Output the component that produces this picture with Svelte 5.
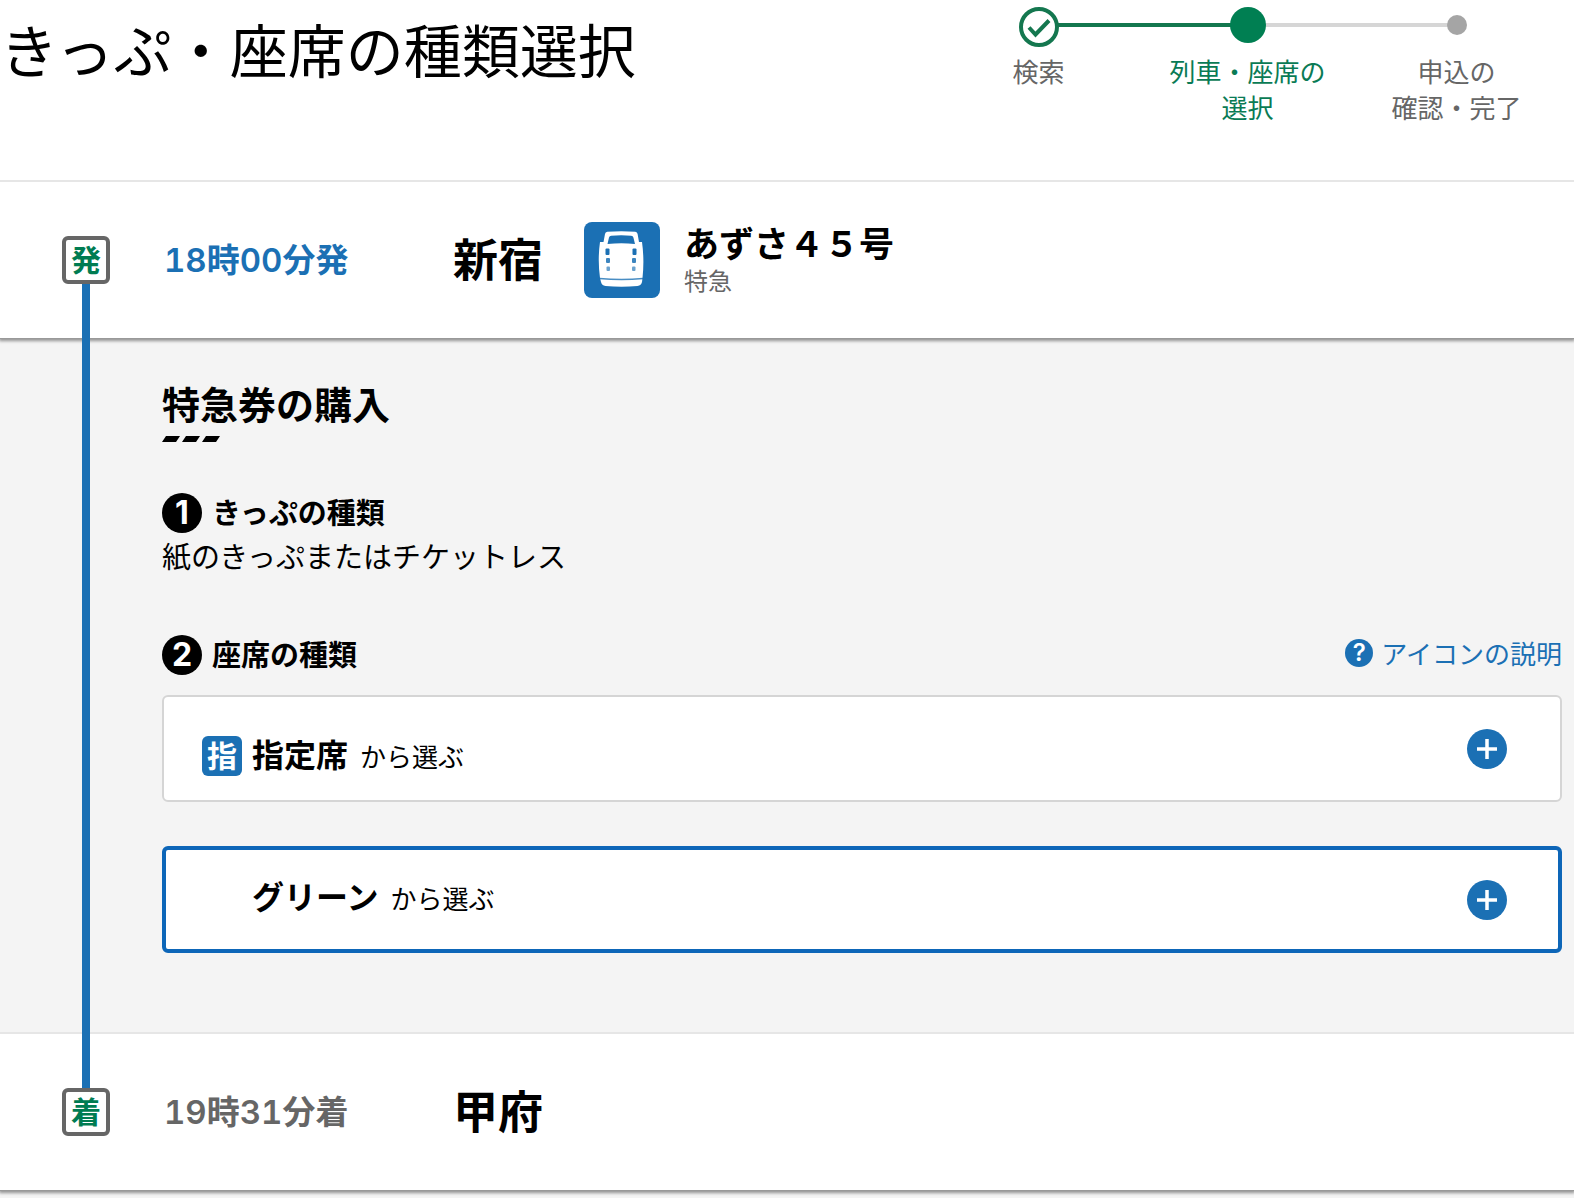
<script lang="ts">
	const steps = [
		{ lines: ['検索'], state: 'done' },
		{ lines: ['列車・座席の', '選択'], state: 'current' },
		{ lines: ['申込の', '確認・完了'], state: 'todo' }
	];

	const seats = [
		{ name: '指定席', mark: '指' },
		{ name: 'グリーン', mark: '' }
	];

	let selected = $state(1);
</script>

<header>
	<h1>きっぷ・座席の種類選択</h1>
	<ol class="steps">
		{#each steps as step}
			<li class={step.state}>
				<span class="marker">
					{#if step.state == 'done'}
						<svg width="40" height="44" viewBox="0 0 40 44" aria-hidden="true">
							<circle cx="20" cy="24" r="18" fill="#fff" stroke="#14774f" stroke-width="4" />
							<path d="M10 24.5l6.5 7L30 17.5" fill="none" stroke="#14774f" stroke-width="4" />
						</svg>
					{:else}
						<span class="dot"></span>
					{/if}
				</span>
				{#each step.lines as line}
					<span class="line">{line}</span>
				{/each}
			</li>
		{/each}
	</ol>
</header>

<main>
	<section class="stop departure">
		<span class="mark">発</span>
		<span class="time">18時00分発</span>
		<strong class="station">新宿</strong>
		<div class="train">
			<svg width="76" height="76" viewBox="0 0 76 76" aria-hidden="true">
				<rect width="76" height="76" rx="8" fill="#1b70b4" />
				<path
					d="M16 20h3.500l1.500-8q.3-2 2.300-2.200q14-1.200 28 0q2 .2 2.300 2.200l1.400 8H58q2.500 18 .5 36l-.5 4q-.7 3.500-4.500 4q-16 1.300-32 0q-3.800-.5-4.500-4l-1-4q-2.500-18 0-36z"
					fill="#fff"
				/>
				<path
					d="M23.500 22l1.500-6.500q.4-1.700 2.200-1.800q10-.7 20 0q1.800.1 2.200 1.800L51 22q-13.700-1.500-27.500 0z"
					fill="#1b70b4"
				/>
				<path d="M15.500 56.500q22 2 43.500 0" fill="none" stroke="#1b70b4" stroke-width="1.500" opacity="0.8" />
				<g fill="#1b70b4">
					<rect x="21.500" y="26.500" width="4" height="6.500" rx="1" />
					<rect x="48.500" y="26.500" width="4" height="6.500" rx="1" />
					<rect x="22" y="36" width="4" height="5" rx="1" opacity="0.85" />
					<rect x="48" y="36" width="4" height="5" rx="1" opacity="0.85" />
					<rect x="22.500" y="44.500" width="3.500" height="4.500" rx="1" opacity="0.65" />
					<rect x="48" y="44.500" width="3.500" height="4.500" rx="1" opacity="0.65" />
				</g>
			</svg>
			<div>
				<p class="train-name">あずさ４５号</p>
				<p class="train-type">特急</p>
			</div>
		</div>
	</section>

	<section class="purchase">
		<h2>特急券の購入</h2>
		<svg class="slashes" width="58" height="6" viewBox="0 0 58 6" aria-hidden="true">
			<path d="M4 0h14l-4 6H0zM24 0h14l-4 6H20zM44 0h14l-4 6H40z" />
		</svg>

		<h3><span class="number">1</span>きっぷの種類</h3>
		<p class="ticket">紙のきっぷまたはチケットレス</p>

		<div class="seat-head">
			<h3><span class="number">2</span>座席の種類</h3>
			<a href="#icons">
				<span class="help">?</span>アイコンの説明
			</a>
		</div>

		<div class="seats">
			{#each seats as seat, i}
				<button type="button" class={['seat', selected == i && 'selected']} onclick={() => (selected = i)}>
					<span class={['label', seat.mark && 'marked']}>
						<span class="seat-mark">{seat.mark}</span>
						<strong>{seat.name}</strong>
						<span class="from">から選ぶ</span>
					</span>
					<svg width="40" height="40" viewBox="0 0 40 40" aria-hidden="true">
						<circle cx="20" cy="20" r="20" fill="#1b70b4" />
						<path d="M10 20h20M20 10v20" stroke="#fff" stroke-width="3.500" />
					</svg>
				</button>
			{/each}
		</div>
	</section>

	<section class="stop arrival">
		<span class="mark">着</span>
		<span class="time">19時31分着</span>
		<strong class="station">甲府</strong>
	</section>
</main>

<style>
	:global(body) {
		background: #f4f4f4;
		color: #000;
		font-family: 'Noto Sans CJK JP', sans-serif;
	}

	h1,
	h2,
	h3,
	p,
	ol {
		margin: 0;
		padding: 0;
	}

	svg {
		display: block;
		flex: none;
	}

	header {
		display: flex;
		justify-content: space-between;
		align-items: flex-start;
		background: #fff;
		border-bottom: 2px solid #e6e6e6;
		padding: 0 13px 55px 0;
	}

	h1 {
		font-size: 58px;
		font-weight: 400;
		line-height: 96px;
		white-space: nowrap;
	}

	.steps {
		display: grid;
		grid-template-columns: repeat(3, 209px);
		list-style: none;
	}

	.steps li {
		color: #666;
		font-size: 26px;
		line-height: 36px;
		text-align: center;
	}

	.steps .current {
		color: #0a7b55;
	}

	.marker {
		display: flex;
		align-items: center;
		justify-content: center;
		position: relative;
		height: 50px;
		margin-bottom: 3px;
	}

	/* connector to the next step */
	li:not(:last-child) .marker::after {
		content: '';
		position: absolute;
		left: 50%;
		top: 23px;
		width: 100%;
		height: 4px;
		background: #d6d6d6;
	}

	li.done .marker::after {
		background: #14774f;
	}

	.marker svg,
	.dot {
		position: relative;
		z-index: 1;
	}

	.dot {
		width: 20px;
		height: 20px;
		border-radius: 50%;
		background: #a5a5a5;
	}

	.current .dot {
		width: 36px;
		height: 36px;
		background: #007f52;
	}

	.line {
		display: block;
	}

	main {
		position: relative;
		padding-bottom: 8px;
	}

	/* rail between the two stops */
	main::before {
		content: '';
		position: absolute;
		z-index: 2;
		left: 82px;
		top: 102px;
		bottom: 111px;
		width: 8px;
		background: #1b70b4;
	}

	.stop {
		display: grid;
		grid-template-columns: 102px 289px 131px 1fr;
		align-items: center;
		position: relative;
		z-index: 1;
		min-height: 76px;
		padding: 40px 12px 40px 62px;
		background: #fff;
		border-bottom: 1px solid #999;
		box-shadow: 0 1px 3px 1px rgba(0, 0, 0, 0.4);
		clip-path: inset(0 0 -8px);
	}

	.mark {
		box-sizing: border-box;
		width: 48px;
		height: 48px;
		border: 4px solid #666;
		border-radius: 6px;
		color: #007c52;
		font-size: 30px;
		font-weight: 700;
		line-height: 36px;
		text-align: center;
	}

	.time {
		color: #1b70b4;
		font-family: Inter, 'Noto Sans CJK JP', sans-serif;
		font-size: 33px;
		font-variant-numeric: tabular-nums;
		font-weight: 600;
		line-height: 48px;
	}

	.arrival .time {
		color: #666;
	}

	.station {
		padding-bottom: 4px;
		font-size: 45px;
		font-weight: 700;
		line-height: 60px;
	}

	.train {
		display: flex;
		align-items: center;
		gap: 24px;
	}

	.train-name {
		font-size: 35px;
		font-weight: 700;
		line-height: 40px;
	}

	.train-type {
		color: #666;
		font-size: 24px;
		line-height: 36px;
	}

	.purchase {
		padding: 40px 12px 79px 162px;
		background: #f4f4f4;
		border-bottom: 2px solid #e6e6e6;
	}

	h2 {
		font-size: 38px;
		font-weight: 700;
		line-height: 48px;
	}

	.slashes {
		margin: 9px 0 51px;
	}

	h3 {
		display: flex;
		align-items: flex-start;
		gap: 10px;
		font-size: 29px;
		font-weight: 700;
		line-height: 36px;
	}

	.number {
		width: 40px;
		height: 40px;
		border-radius: 50%;
		background: #000;
		color: #fff;
		font-family: Inter, sans-serif;
		font-size: 32px;
		line-height: 40px;
		text-align: center;
	}

	.ticket {
		margin-top: 2px;
		font-size: 29px;
		line-height: 40px;
	}

	.seat-head {
		display: flex;
		align-items: flex-start;
		justify-content: space-between;
		margin: 60px 0 20px;
	}

	a {
		display: flex;
		align-items: center;
		gap: 8px;
		color: #1b70b4;
		font-size: 26px;
		line-height: 36px;
		text-decoration: none;
	}

	.help {
		width: 28px;
		height: 28px;
		border-radius: 50%;
		background: #1b70b4;
		color: #fff;
		font-family: Inter, sans-serif;
		font-size: 24px;
		font-weight: 600;
		line-height: 28px;
		text-align: center;
	}

	.seats {
		display: grid;
		gap: 44px;
	}

	.seat {
		display: flex;
		align-items: center;
		justify-content: space-between;
		box-sizing: border-box;
		min-height: 107px;
		padding: 0 53px 0 38px;
		border: 2px solid #d5d5d5;
		border-radius: 6px;
		background: #fff;
		color: #000;
		font-family: inherit;
		cursor: pointer;
	}

	.seat.selected {
		padding: 0 51px 0 36px;
		border: 4px solid #0d66b8;
	}

	.label {
		display: flex;
		align-items: baseline;
		padding-bottom: 12px;
		line-height: 40px;
	}

	.label.marked {
		padding: 12px 0 0;
	}

	.seat-mark {
		width: 40px;
		height: 40px;
		margin-right: 10px;
		border-radius: 6px;
		color: #fff;
		font-size: 30px;
		font-weight: 700;
		line-height: 36px;
	}

	.marked .seat-mark {
		background: #1b70b4;
	}

	.label strong {
		font-size: 32px;
	}

	.from {
		margin-left: 12px;
		font-size: 26px;
	}
</style>
